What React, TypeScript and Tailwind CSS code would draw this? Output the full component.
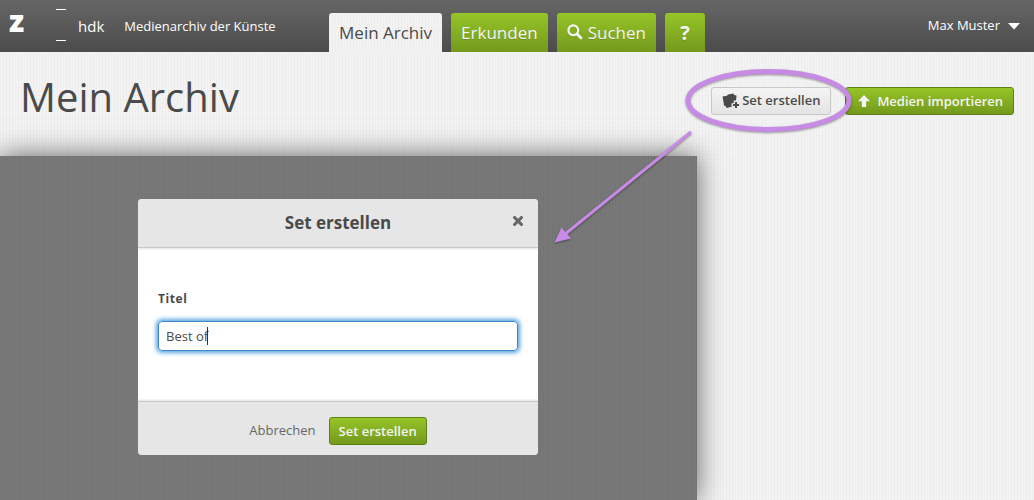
import { useState } from "react";
import type { ReactNode } from "react";

const texture =
  "bg-[repeating-linear-gradient(90deg,rgba(0,0,0,0.018)_0_1px,transparent_1px_3px),repeating-linear-gradient(0deg,rgba(0,0,0,0.008)_0_1px,transparent_1px_4px)]";
const greenButton =
  "rounded-[3px] border border-[#5c8216] bg-linear-to-b from-[#96c527] to-[#74991d] text-[13px] leading-[18px] font-semibold text-[#f4f4f4]";

function SearchIcon() {
  return (
    <svg width="16" height="16" viewBox="0 0 16 16" className="mb-[2px] drop-shadow-xs">
      <circle cx="6.3" cy="6.3" r="4.9" fill="none" stroke="currentColor" strokeWidth="2.2" />
      <path d="M10 10 L14 14" stroke="currentColor" strokeWidth="2.8" strokeLinecap="round" />
    </svg>
  );
}

function SetIcon() {
  return (
    <svg width="18" height="16" viewBox="0 0 18 16">
      <path d="M0.5 3.5 L5 2.8 L6 1.5 L11.5 0.5 L12 2 L14.5 2.5 L14 8 L10.5 13.5 L4.5 15 L3.5 13 L2 12.5 L1.5 9 Z" fill="currentColor" />
      <path d="M13.5 7.5 V16 M9.5 12 H18" stroke="#ececec" strokeWidth="3.6" />
      <path d="M14 9 V15 M11 12 H17" stroke="currentColor" strokeWidth="2" />
    </svg>
  );
}

function ArrowUpIcon() {
  return (
    <svg width="12" height="12" viewBox="0 0 12 12">
      <path d="M6 0 L12 6.3 H8.2 V12 H3.8 V6.3 H0 Z" fill="currentColor" />
    </svg>
  );
}

function CloseIcon() {
  return (
    <svg width="10" height="10" viewBox="0 0 10 10">
      <path d="M1.6 1.6 L8.4 8.4 M8.4 1.6 L1.6 8.4" stroke="currentColor" strokeWidth="3" strokeLinecap="square" />
    </svg>
  );
}

function Tab({ active, children }: { active?: boolean; children: ReactNode }) {
  return (
    <a
      href="#"
      className={
        active
          ? `flex h-[39px] items-center rounded-t-[3px] bg-[#f3f3f3] px-[10px] text-[17px] text-[#4a4a4a] ${texture}`
          : "flex h-[39px] items-center gap-[5px] rounded-t-[3px] bg-linear-to-b from-[#96c527] to-[#74991d] px-[10px] text-[17px] font-medium text-[#f4f4f4] text-shadow-2xs"
      }
    >
      {children}
    </a>
  );
}

function Header() {
  return (
    <header className="grid h-[52px] grid-cols-[1fr_auto_1fr] bg-linear-to-b from-[#666] to-[#4c4c4c] text-white">
      <a href="#" className="flex items-center whitespace-nowrap pl-[9px]">
        <span className="w-[47px] pb-[10px] text-[30px] leading-8 font-extrabold">z</span>
        <span className="mb-[2px] flex h-8 w-[10px] flex-col justify-between border-y border-white" />
        <span className="ml-3 text-[15px] leading-5">hdk</span>
        <span className="ml-5 text-[13px] leading-5 font-medium">Medienarchiv der Künste</span>
      </a>
      <nav className="flex items-end gap-[9px] whitespace-nowrap">
        <Tab active>Mein Archiv</Tab>
        <Tab>Erkunden</Tab>
        <Tab>
          <SearchIcon />
          Suchen
        </Tab>
        <Tab>
          <span className="w-5 text-center text-xl font-bold">?</span>
        </Tab>
      </nav>
      <button className="flex items-center justify-self-end gap-2 pr-[14px] text-[13px] font-medium">
        Max Muster
        <svg width="12" height="7" viewBox="0 0 12 7">
          <path d="M0 0 H12 L6 6.5 Z" fill="currentColor" />
        </svg>
      </button>
    </header>
  );
}

function SetDialog() {
  const [title, setTitle] = useState("Best of");

  return (
    <form
      role="dialog"
      aria-labelledby="dialog-title"
      className="w-[400px] overflow-hidden rounded-[4px] bg-white text-[#4a4a4a]"
    >
      <div className="grid h-[49px] grid-cols-[1fr_auto_1fr] items-center border-b border-[#c8c8c8] bg-[#e6e6e6] px-[15px] shadow-[0_1px_2px_rgba(0,0,0,0.12)]">
        <h2 id="dialog-title" className="col-start-2 text-[17px] leading-6 font-bold">
          Set erstellen
        </h2>
        <button type="button" aria-label="Schliessen" className="justify-self-end pb-1 text-[#666]">
          <CloseIcon />
        </button>
      </div>

      <div className="px-5 pt-[41px] pb-[50px]">
        <label htmlFor="set-title" className="block text-xs leading-5 font-bold tracking-wider">
          Titel
        </label>
        <div className="relative mt-3">
          <input
            id="set-title"
            value={title}
            onChange={(e) => setTitle(e.target.value)}
            className="block h-[30px] w-full rounded-[4px] border border-[#3c87c8] px-[7px] text-[13px] caret-transparent shadow-[0_0_4px_2px_#5aa4e0] outline-none"
          />
          {/* Text cursor */}
          <span className="absolute top-[6px] left-[49px] h-[18px] w-px bg-[#333]" />
        </div>
      </div>

      <div className="flex h-[54px] items-center justify-center gap-[13px] border-t border-[#c8c8c8] bg-[#e6e6e6] pt-1 shadow-[0_-1px_2px_rgba(0,0,0,0.12)]">
        <button type="button" className="text-[13px] text-[#666]">
          Abbrechen
        </button>
        <button type="button" className={`${greenButton} h-7 px-[9px]`}>
          Set erstellen
        </button>
      </div>
    </form>
  );
}

function Annotation() {
  return (
    <svg
      width="304"
      height="190"
      viewBox="730 60 304 190"
      className="pointer-events-none absolute top-[60px] right-0 overflow-visible drop-shadow-[0_1px_1px_rgba(0,0,0,0.4)]"
    >
      <ellipse cx="768.5" cy="100.5" rx="80.5" ry="29" fill="none" stroke="#c78be6" strokeWidth="5" />
      <path d="M691 132 L564 235" stroke="#c78be6" strokeWidth="3" />
      <path d="M554.5 242.5 L561.5 227.5 L571 238.5 Z" fill="#c78be6" />
    </svg>
  );
}

export default function App() {
  return (
    <div
      className={`relative flex min-h-screen flex-col overflow-hidden bg-[#f3f3f3] font-['Open_Sans','Noto_Sans',sans-serif] ${texture}`}
    >
      <Header />

      <div className="flex h-[104px] items-start justify-between px-5">
        <h1 className="pt-[18px] text-[40px] leading-[54px] text-[#4a4a4a]">Mein Archiv</h1>
        <div className="flex gap-[14px] pt-[35px]">
          <button className="flex h-7 items-center gap-[2px] rounded-[3px] border border-[#c8c8c8] bg-linear-to-b from-[#f4f4f4] to-[#e4e4e4] px-[10px] text-[13px] font-semibold text-[#4a4a4a]">
            <SetIcon />
            Set erstellen
          </button>
          <button className={`${greenButton} flex h-7 items-center gap-[7px] pr-[10px] pl-3`}>
            <ArrowUpIcon />
            Medien importieren
          </button>
        </div>
      </div>

      <main className="w-[67.4%] grow bg-[#787878] bg-[repeating-linear-gradient(90deg,rgba(0,0,0,0.035)_0_1px,transparent_1px_3px)] pt-[43px] pb-[45px] pl-[138px] shadow-[0_0_26px_rgba(0,0,0,0.6)]">
        <SetDialog />
      </main>

      <Annotation />
    </div>
  );
}
